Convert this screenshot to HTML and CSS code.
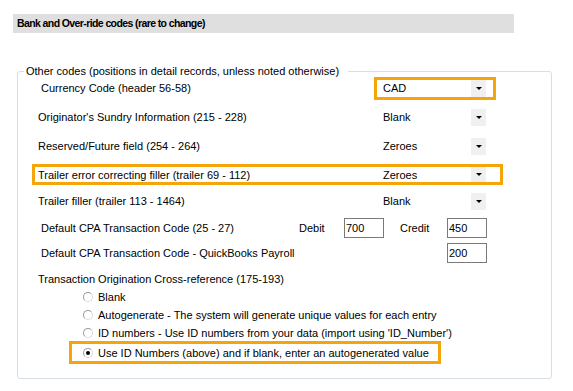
FILE: index.html
```html
<!DOCTYPE html>
<html>
  <head>
    <meta charset="UTF-8" />
    <title>Bank and Over-ride codes</title>
    <link rel="stylesheet" href="styles.css">
  </head>
  <body>
    <div class="section-title">Bank and Over-ride codes (rare to change)</div>

    <fieldset class="codes">
      <legend>Other codes (positions in detail records, unless noted otherwise)</legend>

      <div class="row">
        <span class="label inset">Currency Code (header 56-58)</span>
        <div class="combo highlight"><span>CAD</span><span class="combo-btn"></span></div>
      </div>

      <div class="row">
        <span class="label">Originator's Sundry Information (215 - 228)</span>
        <div class="combo"><span>Blank</span><span class="combo-btn"></span></div>
      </div>

      <div class="row">
        <span class="label">Reserved/Future field (254 - 264)</span>
        <div class="combo"><span>Zeroes</span><span class="combo-btn"></span></div>
      </div>

      <div class="row row-highlight">
        <span class="label">Trailer error correcting filler (trailer 69 - 112)</span>
        <div class="combo"><span>Zeroes</span><span class="combo-btn"></span></div>
      </div>

      <div class="row row-tight">
        <span class="label">Trailer filler (trailer 113 - 1464)</span>
        <div class="combo"><span>Blank</span><span class="combo-btn"></span></div>
      </div>

      <div class="row row-input">
        <span class="label inset cpa-label">Default CPA Transaction Code (25 - 27)</span>
        <span class="field-name">Debit</span>
        <input class="num" type="text" value="700" />
        <span class="field-name credit">Credit</span>
        <input class="num" type="text" value="450" />
      </div>

      <div class="row row-input row-close">
        <span class="label inset">Default CPA Transaction Code - QuickBooks Payroll</span>
        <input class="num push" type="text" value="200" />
      </div>

      <div class="row row-heading">
        <span class="label">Transaction Origination Cross-reference (175-193)</span>
      </div>

      <div class="radios">
        <div class="radio"><span class="mark"></span>Blank</div>
        <div class="radio"><span class="mark"></span>Autogenerate - The system will generate unique values for each entry</div>
        <div class="radio short"><span class="mark"></span>ID numbers - Use ID numbers from your data (import using 'ID_Number')</div>
        <div class="radio selected"><span class="mark checked"></span>Use ID Numbers (above) and if blank, enter an autogenerated value</div>
      </div>
    </fieldset>
  </body>
</html>
```

FILE: styles.css
```css
* {
  box-sizing: border-box;
}

body {
  margin: 0;
  font-family: "Liberation Sans", Arial, sans-serif;
  font-size: 11px;
  color: #000;
  background: #fff;
}

.section-title {
  margin: 14px 0 0 13px;
  width: 501px;
  height: 19px;
  line-height: 19px;
  padding-left: 4px;
  background: #dfdfdf;
  font-size: 10.5px;
  font-weight: bold;
  letter-spacing: -0.6px;
}

.codes {
  margin: 32px 0 0 17px;
  width: 535px;
  padding: 0 0 14px 0;
  border: 1px solid #d5dfe5;
  border-radius: 3px;
}

.codes legend {
  margin-left: 6px;
  padding: 0 9px 0 2px;
  line-height: 13px;
}

.row {
  display: flex;
  align-items: center;
  height: 20px;
  margin: 9px 48px 0 14px;
  padding: 0 10px 0 6px;
}

.row:first-of-type {
  margin-top: 0;
}

.label {
  flex: 1;
  white-space: nowrap;
}

.label.inset {
  margin-left: 3px;
}

.row-highlight {
  height: 21px;
  margin-top: 8px;
  outline: 3px solid #f5a50a;
  outline-offset: -3px;
}

.row-tight {
  margin-top: 6px;
}

/* combo boxes */
.combo {
  display: flex;
  align-items: center;
  justify-content: space-between;
  width: 116px;
  height: 17px;
  padding-left: 6px;
  background: #fff;
}

.combo.highlight {
  outline: 3px solid #f5a50a;
}

.combo-btn {
  display: flex;
  align-items: center;
  justify-content: center;
  width: 15px;
  height: 17px;
  margin-right: 7px;
  background: #f0f0f0;
}

.combo-btn::after {
  content: "";
  border-left: 3px solid transparent;
  border-right: 3px solid transparent;
  border-top: 3px solid #000;
}

/* number fields */
.row-input {
  margin-top: 7px;
  padding-right: 16px;
}

.row-close {
  margin-top: 5px;
}

.cpa-label {
  flex: none;
  width: 258px;
}

.field-name {
  width: 45px;
}

.field-name.credit {
  width: 47px;
  margin-left: 16px;
}

.num {
  width: 40px;
  height: 20px;
  padding: 0 1px;
  border: 1px solid #7a7a7a;
  font-family: inherit;
  font-size: 11px;
  color: #000;
}

.num.push {
  margin-left: auto;
}

.row-heading {
  height: 18px;
  margin-top: 7px;
}

/* radio list */
.radios {
  margin-left: 51px;
}

.radio {
  display: flex;
  align-items: center;
  height: 18px;
  padding-left: 14px;
  white-space: nowrap;
}

.radio.short {
  height: 17px;
}

.radio.selected {
  width: 372px;
  height: 23px;
  outline: 3px solid #f5a50a;
  outline-offset: -3px;
}

.mark {
  position: relative;
  width: 10px;
  height: 10px;
  margin-right: 5px;
  border: 1px solid;
  border-color: #9a9a9a #dadada #dadada #9a9a9a;
  border-radius: 50%;
  background: #fff;
}

.mark.checked::after {
  content: "";
  position: absolute;
  top: 2px;
  left: 2px;
  width: 4px;
  height: 4px;
  border-radius: 50%;
  background: #000;
}
```
